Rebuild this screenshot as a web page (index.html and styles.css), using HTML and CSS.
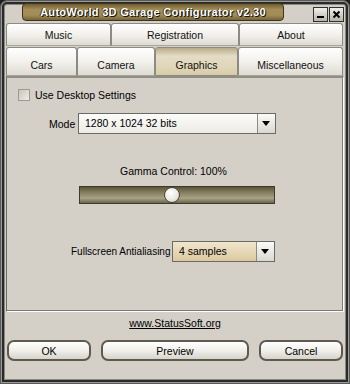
FILE: index.html
```
<!DOCTYPE html>
<html>
  <head>
    <meta charset="utf-8" />
    <link rel="stylesheet" href="styles.css">
  </head>
  <body>
    <div class="win">
      <div class="titlebar">
        <div class="title">AutoWorld 3D Garage Configurator v2.30</div>
        <div class="tbtns">
          <span class="tbtn"><svg width="11" height="11" viewBox="0 0 11 11"><rect x="2" y="7" width="7" height="2" fill="#000"/></svg></span>
          <span class="tbtn"><svg width="11" height="11" viewBox="0 0 11 11"><path d="M2.5 2.5 L8.5 8.5 M8.5 2.5 L2.5 8.5" stroke="#000" stroke-width="2"/></svg></span>
        </div>
      </div>
      <div class="tabs row1">
        <div class="tab t-music">Music</div>
        <div class="tab t-reg">Registration</div>
        <div class="tab t-about">About</div>
      </div>
      <div class="tabs row2">
        <div class="tab t-cars">Cars</div>
        <div class="tab t-cam">Camera</div>
        <div class="tab t-gfx sel">Graphics</div>
        <div class="tab t-misc">Miscellaneous</div>
      </div>
      <div class="panel">
        <label class="chk"><span class="box"></span>Use Desktop Settings</label>
        <div class="mode">
          <span class="lbl">Mode</span>
          <div class="combo wide"><span class="val">1280 x 1024 32 bits</span><span class="arrow"></span></div>
        </div>
        <div class="gamma">Gamma Control: 100%</div>
        <div class="slider"><span class="thumb"></span></div>
        <div class="aa">
          <span class="lbl">Fullscreen Antialiasing</span>
          <div class="combo tan"><span class="val">4 samples</span><span class="arrow"></span></div>
        </div>
      </div>
      <div class="link"><a href="#">www.StatusSoft.org</a></div>
      <div class="buttons">
        <div class="btn b-ok">OK</div>
        <div class="btn b-prev">Preview</div>
        <div class="btn b-cancel">Cancel</div>
      </div>
    </div>
  </body>
</html>
```
FILE: styles.css
```
* { box-sizing: border-box; }
body { margin: 0; background: #1e1e1e; font-family: "Liberation Sans", Arial, sans-serif; font-size: 10px; color: #000; }
.win { width: 350px; height: 384px; background: #d4d0c8; border-radius: 7px 7px 0 0; border: 1px solid #5a5a5a; box-shadow: inset 0 0 0 1px #9a9a96, inset 0 0 0 3px #2a2a2a, inset 0 0 0 4px #8a8880; padding: 0 4px 4px 4px; display: flex; flex-direction: column; }
.titlebar { height: 22px; display: flex; align-items: flex-start; padding-top: 2px; }
.title { margin-left: 17px; width: 262px; height: 18px; border-radius: 4px; border: 1px solid #3c3420; background: linear-gradient(#6e5d32, #a48d56 35%, #a38c55 70%, #75643a); color: #fff; font-weight: bold; font-size: 11px; line-height: 16px; text-align: center; text-shadow: 1px 1px 0 #1a1408, -1px 0 0 #3a3018; letter-spacing: 0.3px; }
.tbtns { margin-left: auto; display: flex; gap: 1px; margin-top: 4px; margin-right: 1px; }
.tbtn { width: 15px; height: 15px; border: 1px solid #303030; background: linear-gradient(#f2f0ea, #b8b4a8); display: flex; align-items: center; justify-content: center; }
.tabs { display: flex; padding: 0 1px; }
.tab { height: 22px; border: 1px solid #8c8a84; border-bottom-color: #a8a59c; border-radius: 3px 3px 0 0; background: linear-gradient(#ffffff, #f2f1ec 50%, #dedbd2); display: flex; align-items: center; justify-content: center; font-size: 10.5px; color: #111; }
.row1 .tab { height: 23px; }
.row2 { margin-top: 1px; }
.row2 .tab { height: 29px; padding-top: 6px; }
.t-music { width: 105px; }
.t-reg { width: 128px; }
.t-about { width: 104px; }
.t-cars { width: 71px; }
.t-cam { width: 78px; }
.t-gfx { width: 83px; }
.t-misc { width: 105px; }
.tab.sel { background: linear-gradient(#b8ab88, #e4dcc6 30%, #e0d6b8 70%, #d8cba6); border-color: #8c8a84; }
.panel { margin: 0 1px; height: 236px; border: 1px solid #6c6a64; border-top: 2px solid #908d84; border-right-color: #fff; border-bottom-color: #fff; box-shadow: inset -1px -1px 0 #7c7a74; display: flex; flex-direction: column; padding: 10px 0 0 11px; }
.chk { display: flex; align-items: center; height: 14px; font-size: 10.5px; }
.box { width: 12px; height: 12px; border: 1px solid #9c9a94; background: linear-gradient(135deg, #c8c4b8, #f0eee8); margin-right: 5px; }
.mode { display: flex; align-items: center; margin-top: 11px; padding-left: 31px; }
.mode .lbl { width: 29px; font-size: 10.5px; }
.combo { height: 21px; border: 1px solid #6c6a64; display: flex; background: linear-gradient(#fcfcfa, #ecebe6); }
.combo.wide { width: 198px; }
.combo.tan { width: 103px; background: linear-gradient(#f0e6cc, #dcc9a0); }
.val { flex: 1; padding-left: 6px; line-height: 19px; font-size: 10.5px; }
.arrow { width: 18px; border-left: 1px solid #8c8a84; background: linear-gradient(#fafaf8, #dad8d0); position: relative; }
.arrow::after { content: ""; position: absolute; left: 4px; top: 7px; border: 4px solid transparent; border-top: 5px solid #000; border-bottom: 0; }
.gamma { margin-top: 31px; text-align: center; padding-right: 14px; font-size: 10.5px; }
.slider { margin: 9px 0 0 61px; width: 196px; height: 18px; border: 1px solid #3e3a2c; background: linear-gradient(#5c5438, #8a8464 40%, #a6a386 70%, #6a6448); position: relative; }
.thumb { position: absolute; left: 84px; top: 0; width: 16px; height: 16px; border-radius: 50%; border: 1px solid #4a4638; background: radial-gradient(circle at 40% 35%, #ffffff, #e8e6e0 60%, #b4b0a4); }
.aa { display: flex; align-items: center; margin-top: 37px; padding-left: 53px; }
.aa .lbl { width: 101px; font-size: 10px; white-space: nowrap; }
.link { height: 22px; display: flex; align-items: center; justify-content: center; }
.link a { color: #000; text-decoration: underline; font-size: 10.5px; }
.buttons { display: flex; padding: 6px 1px 0 2px; gap: 0; }
.btn { height: 21px; border: 2px solid #5e5a50; border-radius: 7px; background: linear-gradient(#ffffff, #f0efea 50%, #d6d3ca); display: flex; align-items: center; justify-content: center; font-size: 10.5px; }
.b-ok { width: 84px; }
.b-prev { width: 148px; margin-left: 10px; }
.b-cancel { width: 84px; margin-left: 10px; }
```
